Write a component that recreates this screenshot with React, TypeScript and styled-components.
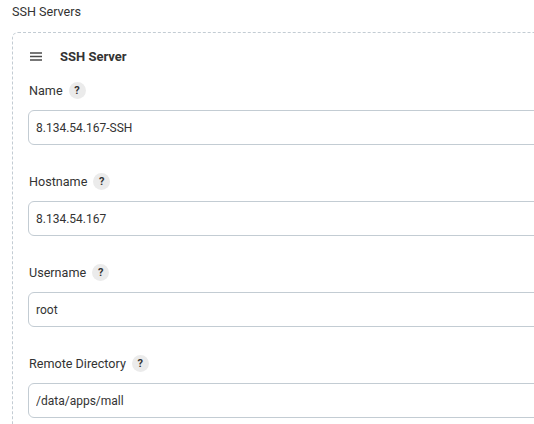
import React from "react";
import styled, { createGlobalStyle } from "styled-components";

const GlobalStyle = createGlobalStyle`
  html, body {
    margin: 0;
    padding: 0;
    background: #ffffff;
    overflow: hidden;
  }
  body {
    font-family: Roboto, "Noto Sans", sans-serif;
    font-size: 12.6px;
    color: #333333;
  }
`;

const Page = styled.div`
  width: 534px;
  height: 424px;
  overflow: hidden;
  padding-left: 12px;
  box-sizing: border-box;
`;

const Title = styled.div`
  height: 24px;
  line-height: 24px;
  margin-bottom: 8px;
`;

const Repeated = styled.div`
  border: 1px dashed #c3ccd3;
  border-radius: 6px;
  margin-right: -60px;
  padding: 13px 15px 20px 15px;
`;

const Header = styled.div`
  display: flex;
  align-items: center;
  gap: 18px;
  height: 20px;
  padding-left: 2px;
  margin-bottom: 14px;
`;

const HeaderTitle = styled.span`
  font-weight: 700;
  font-size: 13px;
`;

const Field = styled.div`
  display: flex;
  flex-direction: column;
  margin-bottom: 26px;
`;

const LabelRow = styled.div`
  display: flex;
  align-items: center;
  gap: 6px;
  height: 20px;
  margin-bottom: 10px;
  padding-left: 1px;
`;

const Help = styled.span`
  display: inline-flex;
  align-items: center;
  justify-content: center;
  width: 17px;
  height: 17px;
  border-radius: 50%;
  background: #ebebeb;
  color: #333333;
  font-size: 11px;
  font-weight: 700;
`;

const Input = styled.input`
  box-sizing: border-box;
  width: 100%;
  height: 35px;
  border: 1px solid #c3ccd3;
  border-radius: 6px;
  padding: 0 7px;
  font-family: inherit;
  font-size: 12px;
  color: #333333;
  background: #ffffff;
  outline: none;
`;

const Hamburger = () => (
  <svg width="12" height="9" viewBox="0 0 12 9" aria-hidden="true">
    <g stroke="#4a4a4a" strokeWidth="1.5">
      <line x1="0" y1="1" x2="12" y2="1" />
      <line x1="0" y1="4.5" x2="12" y2="4.5" />
      <line x1="0" y1="8" x2="12" y2="8" />
    </g>
  </svg>
);

const fields = [
  { label: "Name", value: "8.134.54.167-SSH" },
  { label: "Hostname", value: "8.134.54.167" },
  { label: "Username", value: "root" },
  { label: "Remote Directory", value: "/data/apps/mall" },
];

export default function App() {
  return (
    <Page>
      <GlobalStyle />
      <Title>SSH Servers</Title>
      <Repeated>
        <Header>
          <Hamburger />
          <HeaderTitle>SSH Server</HeaderTitle>
        </Header>
        {fields.map((f) => (
          <Field key={f.label}>
            <LabelRow>
              <span>{f.label}</span>
              <Help>?</Help>
            </LabelRow>
            <Input defaultValue={f.value} readOnly />
          </Field>
        ))}
      </Repeated>
    </Page>
  );
}
